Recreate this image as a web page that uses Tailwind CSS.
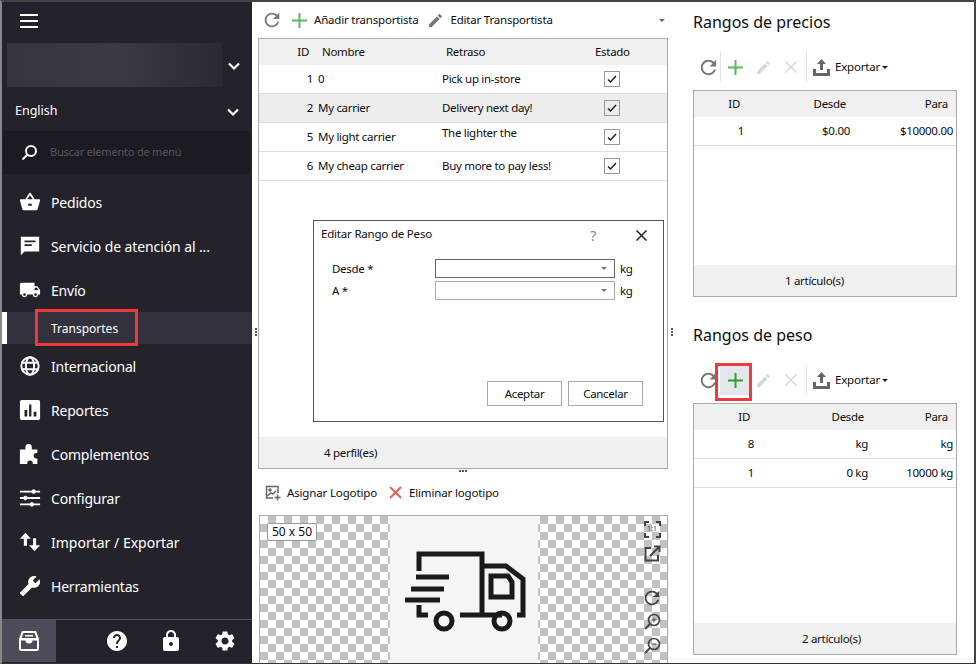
<!DOCTYPE html>
<html lang="es">
  <head>
    <meta charset="UTF-8" />
    <title>Transportes</title>
    <script src="https://cdn.jsdelivr.net/npm/@tailwindcss/browser@4"></script>
  </head>
  <body class="bg-white font-['Noto_Sans',sans-serif] text-[11.5px] tracking-[-0.3px] text-[#0d0d0d] overflow-hidden">
    <div class="relative flex w-[976px] h-[664px] border-t-2 border-r-2 border-b border-l-2 border-t-[#444] border-r-[#444] border-b-[#333] border-l-[#888] box-border">

      <!-- Sidebar -->
      <aside class="w-[250px] shrink-0 flex flex-col bg-[#24232c] text-white text-[14px] tracking-[-0.2px]">
        <div class="h-[41px] pl-[18px] pt-[12px] shrink-0">
          <div class="w-[18px] h-[14px] flex flex-col justify-between">
            <span class="h-[2px] bg-white"></span><span class="h-[2px] bg-white"></span><span class="h-[2px] bg-white"></span>
          </div>
        </div>
        <div class="h-[44px] flex items-center shrink-0 pl-[5px]">
          <div class="w-[215px] h-[44px] bg-gradient-to-r from-[#36353b] via-[#3b3a40] to-[#2b2a32]"></div>
          <svg class="ml-[4px] w-[16px] h-[16px] mt-[2px]" viewBox="0 0 16 16" fill="none" stroke="white" stroke-width="2.2"><path d="M3 5.500l5 5 5-5" /></svg>
        </div>
        <div class="h-[44px] pt-[5px] flex items-center justify-between shrink-0 pl-[13px] pr-[11px] text-[12.5px] tracking-normal">
          <span>English</span>
          <svg class="w-[16px] h-[16px]" viewBox="0 0 16 16" fill="none" stroke="white" stroke-width="2.2"><path d="M3 5.500l5 5 5-5" /></svg>
        </div>
        <div class="h-[43px] ml-[1px] mr-[2px] flex items-center bg-[#1b1b21] shrink-0 pl-[18px] gap-[12px] text-[11px] text-[#55555c] tracking-normal">
          <svg class="w-[17px] h-[17px]" viewBox="0 0 17 17" fill="none" stroke="white" stroke-width="2"><circle cx="10" cy="7" r="5" /><path d="M6.500 10.500L1.500 15.500" /></svg>
          <span class="tracking-[-0.2px]">Buscar elemento de menú</span>
        </div>

        <nav class="flex-1 pt-[6px]">
          <a class="flex items-center h-[44px] pl-[17px] gap-[10px]">
            <svg class="w-[22px] h-[22px]" viewBox="0 0 24 24" fill="white"><path d="M17.210 9l-4.380-6.560c-.19-.28-.51-.42-.83-.42-.32 0-.64.14-.83.43L6.790 9H2c-.55 0-1 .45-1 1 0 .09.01.18.04.27l2.540 9.270c.23.84 1 1.460 1.920 1.460h13c.92 0 1.690-.62 1.930-1.460l2.540-9.270L23 10c0-.55-.45-1-1-1h-4.790zM9 9l3-4.400L15 9H9zm1 5h4v2h-4z" fill-rule="evenodd" /></svg>
            <span>Pedidos</span>
          </a>
          <a class="flex items-center h-[44px] pl-[17px] gap-[10px]">
            <svg class="w-[22px] h-[22px]" viewBox="0 0 24 24" fill="white"><path fill-rule="evenodd" d="M2 2h20v16H6l-4 4V2zm4 4v2h12V6H6zm0 4v2h8v-2H6z" /></svg>
            <span class="tracking-[-0.1px]">Servicio de atención al ...</span>
          </a>
          <a class="flex items-center h-[44px] pl-[17px] gap-[10px]">
            <svg class="w-[22px] h-[22px]" viewBox="0 0 24 24" fill="white"><path d="M20 8h-3V4H3c-1.100 0-2 .9-2 2v11h2c0 1.660 1.340 3 3 3s3-1.340 3-3h6c0 1.660 1.340 3 3 3s3-1.340 3-3h2v-5l-3-4zM6 18.500c-.83 0-1.500-.67-1.500-1.500s.67-1.500 1.500-1.500 1.500.67 1.500 1.500-.67 1.500-1.500 1.500zm13.500-9l1.960 2.500H17V9.500h2.500zm-1.500 9c-.83 0-1.500-.67-1.500-1.500s.67-1.500 1.500-1.500 1.500.67 1.500 1.500-.67 1.500-1.500 1.500z" /></svg>
            <span>Envío</span>
          </a>
          <a class="relative flex items-center h-[32px] pt-[1px] pl-[49px] bg-[#33323c] text-[12px] tracking-normal">
            <span class="absolute left-0 top-0 bottom-0 w-[5px] bg-white"></span>
            <span>Transportes</span>
            <span class="absolute left-[33px] -top-[3px] w-[103px] h-[37px] border-[3px] border-[#f0393f]"></span>
          </a>
          <a class="flex items-center h-[44px] pl-[17px] gap-[10px]">
            <svg class="w-[22px] h-[22px]" viewBox="0 0 24 24" fill="none" stroke="white" stroke-width="2.200"><circle cx="12" cy="12" r="9.500" /><ellipse cx="12" cy="12" rx="4.500" ry="9.500" /><path d="M2.500 8.500h19M2.500 15.500h19" /></svg>
            <span>Internacional</span>
          </a>
          <a class="flex items-center h-[44px] pl-[17px] gap-[10px]">
            <svg class="w-[22px] h-[22px]" viewBox="0 0 24 24" fill="white"><path d="M3 1h18c1.100 0 2 .9 2 2v18c0 1.100-.9 2-2 2H3c-1.100 0-2-.9-2-2V3c0-1.100.9-2 2-2zm3 11v7h3v-7H6zm5-6v13h2.500V6H11zm5 8v5h3v-5h-3z" fill-rule="evenodd" /></svg>
            <span>Reportes</span>
          </a>
          <a class="flex items-center h-[44px] pl-[17px] gap-[10px]">
            <svg class="w-[22px] h-[22px]" viewBox="0 0 24 24" fill="white"><path d="M1 7h6V4.500a3.500 3.500 0 0 1 7 0V7h6v4h-1a3 3 0 0 0 0 6h1v6h-5v-1a3 3 0 0 0-6 0v1H1z" /></svg>
            <span>Complementos</span>
          </a>
          <a class="flex items-center h-[44px] pl-[17px] gap-[10px]">
            <svg class="w-[22px] h-[22px]" viewBox="0 0 24 24" fill="white" stroke="white"><path d="M1 5h22M1 12h22M1 19h22" stroke-width="2" /><circle cx="16" cy="5" r="2" /><circle cx="7" cy="12" r="2" /><circle cx="14" cy="19" r="2" /></svg>
            <span>Configurar</span>
          </a>
          <a class="flex items-center h-[44px] pl-[17px] gap-[10px]">
            <svg class="w-[22px] h-[22px]" viewBox="0 0 24 24" fill="white"><path d="M7 2L1 8.500h4.300V16h3.400V8.500H13L7 2zm10 20l6-6.500h-4.300V8h-3.400v7.500H11L17 22z" /></svg>
            <span class="tracking-normal">Importar / Exportar</span>
          </a>
          <a class="flex items-center h-[44px] pl-[17px] gap-[10px]">
            <svg class="w-[22px] h-[22px] -scale-x-100" viewBox="0 0 24 24" fill="white"><path d="M22.700 19l-9.100-9.100c.9-2.300.4-5-1.500-6.900-2-2-5-2.400-7.400-1.300L9 6 6 9 1.600 4.700C.4 7.100.9 10.100 2.900 12.100c1.900 1.900 4.600 2.400 6.900 1.500l9.100 9.100c.4.4 1 .4 1.400 0l2.300-2.300c.5-.4.5-1.100.1-1.400z" /></svg>
            <span>Herramientas</span>
          </a>
        </nav>

        <div class="h-[43px] flex items-center border-t border-[#55545c] shrink-0 mb-[1px]">
          <div class="w-[54px] h-full flex items-center justify-center bg-[#4e4c58]">
            <svg class="w-[22px] h-[22px]" viewBox="0 0 22 22" fill="white"><path fill-rule="evenodd" d="M4 1h14l3 8v10c0 1.100-.9 2-2 2H3c-1.100 0-2-.9-2-2V9l3-8zm1.500 2L3.500 8h15l-2-5h-11zM3 10.500V19h16v-8.500h-4.500a3.500 3 0 0 1-7 0H3z" /><path d="M7 5h8v1.500H7z" /></svg>
          </div>
          <div class="w-[54px] ml-[34px] flex justify-center">
            <svg class="w-[24px] h-[24px]" viewBox="0 0 24 24" fill="white"><path d="M12 2C6.480 2 2 6.480 2 12s4.480 10 10 10 10-4.480 10-10S17.520 2 12 2zm1 17h-2v-2h2v2zm2.070-7.750l-.9.920C13.450 12.900 13 13.500 13 15h-2v-.5c0-1.100.45-2.100 1.170-2.830l1.240-1.260c.37-.36.59-.86.59-1.410 0-1.100-.9-2-2-2s-2 .9-2 2H8c0-2.210 1.790-4 4-4s4 1.790 4 4c0 .88-.36 1.680-.93 2.250z" /></svg>
          </div>
          <div class="w-[54px] flex justify-center">
            <svg class="w-[24px] h-[24px]" viewBox="0 0 24 24" fill="white"><path d="M18 8h-1V6c0-2.760-2.240-5-5-5S7 3.240 7 6v2H6c-1.100 0-2 .9-2 2v10c0 1.100.9 2 2 2h12c1.100 0 2-.9 2-2V10c0-1.100-.9-2-2-2zm-6 9c-1.100 0-2-.9-2-2s.9-2 2-2 2 .9 2 2-.9 2-2 2zm3.100-9H8.900V6c0-1.710 1.390-3.100 3.100-3.100 1.710 0 3.100 1.390 3.100 3.100v2z" /></svg>
          </div>
          <div class="w-[54px] flex justify-center">
            <svg class="w-[24px] h-[24px]" viewBox="0 0 24 24" fill="white"><path d="M19.140 12.940c.04-.3.06-.61.06-.94 0-.32-.02-.64-.07-.94l2.030-1.580c.18-.14.23-.41.12-.61l-1.920-3.320c-.12-.22-.37-.29-.59-.22l-2.390.96c-.5-.38-1.030-.7-1.620-.94l-.36-2.540c-.04-.24-.24-.41-.48-.41h-3.840c-.24 0-.43.17-.47.41l-.36 2.540c-.59.24-1.130.57-1.620.94l-2.390-.96c-.22-.08-.47 0-.59.22L2.740 8.870c-.12.21-.08.47.12.61l2.030 1.580c-.05.3-.09.63-.09.94s.02.64.07.94l-2.030 1.580c-.18.14-.23.41-.12.61l1.920 3.320c.12.22.37.29.59.22l2.390-.96c.5.38 1.030.7 1.620.94l.36 2.540c.05.24.24.41.48.41h3.840c.24 0 .44-.17.47-.41l.36-2.540c.59-.24 1.130-.56 1.620-.94l2.390.96c.22.08.47 0 .59-.22l1.920-3.320c.12-.22.07-.47-.12-.61l-2.010-1.580zM12 15.600c-1.980 0-3.600-1.620-3.600-3.600s1.620-3.600 3.600-3.600 3.600 1.620 3.600 3.600-1.620 3.600-3.600 3.600z" /></svg>
          </div>
        </div>
      </aside>

      <!-- Carriers column -->
      <main class="relative w-[433px] shrink-0 pl-[6px] pr-[17px] flex flex-col">
        <span class="absolute left-[3px] top-[326px] w-[2px] h-[8px] bg-[repeating-linear-gradient(#555_0_2px,transparent_2px_3px)]"></span>
        <span class="absolute left-[419px] top-[326px] w-[2px] h-[8px] bg-[repeating-linear-gradient(#555_0_2px,transparent_2px_3px)]"></span>
        <span class="absolute left-[207px] top-[468px] w-[8px] h-[2px] bg-[repeating-linear-gradient(90deg,#555_0_2px,transparent_2px_3px)]"></span>

        <div class="h-[36px] shrink-0 flex items-center pl-[3px]">
          <svg class="w-[22px] h-[22px]" viewBox="0 0 24 24" fill="#777"><path d="M17.650 6.350C16.200 4.900 14.210 4 12 4c-4.420 0-7.990 3.580-7.990 8s3.570 8 7.990 8c3.730 0 6.840-2.550 7.730-6h-2.080c-.82 2.330-3.040 4-5.650 4-3.310 0-6-2.690-6-6s2.690-6 6-6c1.660 0 3.140.69 4.220 1.780L13 11h7V4l-2.350 2.350z" /></svg>
          <svg class="ml-[9px] w-[15px] h-[15px]" viewBox="0 0 15 15" stroke="#5cb85c" stroke-width="2"><path d="M7.500 0v15M0 7.500h15" /></svg>
          <span class="ml-[7px] tracking-[-0.2px]">Añadir transportista</span>
          <svg class="ml-[9px] w-[17px] h-[17px]" viewBox="0 0 24 24" fill="#777"><path d="M3 17.250V21h3.750L17.810 9.940l-3.750-3.750L3 17.250zM20.710 7.040c.39-.39.39-1.020 0-1.410l-2.340-2.340c-.39-.39-1.020-.39-1.410 0l-1.830 1.830 3.750 3.750 1.830-1.830z" /></svg>
          <span class="ml-[6px] tracking-[-0.2px]">Editar Transportista</span>
          <span class="ml-auto mr-[3px] w-0 h-0 border-x-[3px] border-x-transparent border-t-[3px] border-t-[#666]"></span>
        </div>

        <section class="relative h-[431px] shrink-0 border border-[#aaa] flex flex-col">
          <div class="h-[26px] shrink-0 flex items-center bg-[#f0f0f0]">
            <span class="w-[50px] text-right">ID</span>
            <span class="ml-[13px] w-[124px]">Nombre</span>
            <span class="w-[149px]">Retraso</span>
            <span class="w-[34px] text-center">Estado</span>
          </div>
          <div class="h-[29px] flex items-center border-b border-[#ddd]">
            <span class="w-[54px] text-right">1</span>
            <span class="ml-[5px] w-[124px]">0</span>
            <span class="w-[162px]">Pick up in-store</span>
            <span class="w-[16px] h-[16px] border border-[#999] flex items-center justify-center"><svg class="w-[10px] h-[10px]" viewBox="0 0 10 10" fill="none" stroke="#222" stroke-width="1.500"><path d="M1 5.500l2.500 2.500 5.500-6" /></svg></span>
          </div>
          <div class="h-[29px] flex items-center border-b border-[#ddd] bg-[#ededed]">
            <span class="w-[54px] text-right">2</span>
            <span class="ml-[5px] w-[124px]">My carrier</span>
            <span class="w-[162px]">Delivery next day!</span>
            <span class="w-[16px] h-[16px] border border-[#999] flex items-center justify-center"><svg class="w-[10px] h-[10px]" viewBox="0 0 10 10" fill="none" stroke="#222" stroke-width="1.500"><path d="M1 5.500l2.500 2.500 5.500-6" /></svg></span>
          </div>
          <div class="h-[29px] flex items-center border-b border-[#ddd]">
            <span class="w-[54px] text-right">5</span>
            <span class="ml-[5px] w-[124px]">My light carrier</span>
            <span class="w-[162px] -mt-[9px]">The lighter the</span>
            <span class="w-[16px] h-[16px] border border-[#999] flex items-center justify-center"><svg class="w-[10px] h-[10px]" viewBox="0 0 10 10" fill="none" stroke="#222" stroke-width="1.500"><path d="M1 5.500l2.500 2.500 5.500-6" /></svg></span>
          </div>
          <div class="h-[29px] flex items-center border-b border-[#ddd]">
            <span class="w-[54px] text-right">6</span>
            <span class="ml-[5px] w-[124px]">My cheap carrier</span>
            <span class="w-[162px]">Buy more to pay less!</span>
            <span class="w-[16px] h-[16px] border border-[#999] flex items-center justify-center"><svg class="w-[10px] h-[10px]" viewBox="0 0 10 10" fill="none" stroke="#222" stroke-width="1.500"><path d="M1 5.500l2.500 2.500 5.500-6" /></svg></span>
          </div>
          <div class="flex-1"></div>
          <div class="h-[31px] shrink-0 flex items-center bg-[#f0f0f0] pl-[65px]">4 perfil(es)</div>
        </section>

        <div class="h-[46px] shrink-0 flex items-center pl-[7px] pt-[1px]">
          <svg class="w-[16px] h-[16px]" viewBox="0 0 16 16" fill="none" stroke="#666" stroke-width="1.500"><path d="M8 13H1.500V1.500H13V8" /><circle cx="5" cy="5" r="1" fill="#666" /><path d="M2 11l4-3 2 1 3-3" /><path d="M12.500 9.500v6M9.500 12.500h6" /></svg>
          <span class="ml-[6px] tracking-[-0.15px]">Asignar Logotipo</span>
          <svg class="ml-[12px] w-[13px] h-[13px]" viewBox="0 0 13 13" stroke="#e8605a" stroke-width="2"><path d="M1 1l11 11M12 1L1 12" /></svg>
          <span class="ml-[7px] tracking-[-0.15px]">Eliminar logotipo</span>
        </div>

        <section class="relative flex-1 min-h-0 border-x border-t border-[#aaa] flex justify-center bg-white bg-[repeating-conic-gradient(#c2c2c2_0_25%,#fff_0_50%)] bg-[length:16px_16px] ml-[1px] overflow-hidden">
          <div class="w-[148px] h-full bg-[#f5f5f5]">
            <svg class="w-[148px] h-[148px]" viewBox="0 0 148 148" fill="none" stroke="#1a1a1a" stroke-width="5">
              <path d="M29 55V38H92V99M29 89V99H38M70 99H112M127 99H133V63L116 50H92" />
              <path d="M101 60H118L122 66V81H101Z" />
              <path d="M26 61H59M21 73H54M15 84H50" />
              <circle cx="54" cy="105" r="8" />
              <circle cx="112" cy="105" r="8" />
            </svg>
          </div>
          <span class="absolute left-[7px] top-[7px] h-[18px] px-[4px] flex items-center bg-white border border-[#999] rounded-[2px] text-[12px] tracking-normal">50 x 50</span>
          <div class="absolute right-0 top-0 bottom-0 w-[30px] flex flex-col items-center pt-[5px]">
            <span class="relative w-[17px] h-[17px] flex items-center justify-center text-[7px] text-[#444] tracking-normal">
              <svg class="absolute inset-0 w-[17px] h-[17px]" viewBox="0 0 17 17" fill="none" stroke="#444" stroke-width="2"><path d="M1 5V1h4M12 1h4v4M16 12v4h-4M5 16H1v-4" /></svg>
              1:1
            </span>
            <svg class="mt-[7px] w-[17px] h-[17px]" viewBox="0 0 17 17" fill="none" stroke="#444" stroke-width="2"><path d="M7 3H1.500v12.500H14V10M6 11L15.500 1.500M10 1.500h5.500V7" /></svg>
            <svg class="mt-[25px] w-[22px] h-[22px]" viewBox="0 0 24 24" fill="#444"><path d="M17.650 6.350C16.200 4.900 14.210 4 12 4c-4.420 0-7.990 3.580-7.990 8s3.570 8 7.990 8c3.730 0 6.840-2.550 7.730-6h-2.080c-.82 2.330-3.040 4-5.650 4-3.310 0-6-2.690-6-6s2.690-6 6-6c1.660 0 3.140.69 4.220 1.780L13 11h7V4l-2.350 2.350z" /></svg>
            <svg class="mt-[4px] w-[17px] h-[17px]" viewBox="0 0 17 17" fill="none" stroke="#444" stroke-width="1.700"><circle cx="10" cy="7" r="5.500" /><path d="M6 11l-5 5" stroke-width="2" /><path d="M7.500 7h5M10 4.500v5" stroke-width="1" /></svg>
            <svg class="mt-[7px] w-[17px] h-[17px]" viewBox="0 0 17 17" fill="none" stroke="#444" stroke-width="1.700"><circle cx="10" cy="7" r="5.500" /><path d="M6 11l-5 5" stroke-width="2" /><path d="M7.500 7h5" stroke-width="1" /></svg>
          </div>
        </section>

        <!-- Dialog -->
        <div class="absolute left-[61px] top-[218px] w-[351px] h-[202px] bg-white border border-[#555] flex flex-col">
          <div class="h-[25px] flex items-center pl-[7px] pr-[16px] shrink-0">
            <span class="tracking-[-0.2px]">Editar Rango de Peso</span>
            <span class="ml-auto text-[14px] text-[#888] mt-[3px]">?</span>
            <svg class="ml-[40px] w-[11px] h-[11px] mt-[3px]" viewBox="0 0 11 11" stroke="#222" stroke-width="1.500"><path d="M.5.5l10 10M10.500.5l-10 10" /></svg>
          </div>
          <div class="mt-[13px] pl-[18px] flex items-center h-[19px]">
            <span class="w-[103px]">Desde *</span>
            <span class="w-[180px] h-[19px] border border-[#666] flex items-center justify-end pr-[7px]"><span class="w-0 h-0 border-x-[3.500px] border-x-transparent border-t-[3.500px] border-t-[#777]"></span></span>
            <span class="ml-[5px]">kg</span>
          </div>
          <div class="mt-[3px] pl-[18px] flex items-center h-[19px]">
            <span class="w-[103px]">A *</span>
            <span class="w-[180px] h-[19px] border border-[#aaa] flex items-center justify-end pr-[7px]"><span class="w-0 h-0 border-x-[3.500px] border-x-transparent border-t-[3.500px] border-t-[#777]"></span></span>
            <span class="ml-[5px]">kg</span>
          </div>
          <div class="mt-auto mb-[15px] flex justify-end gap-[6px] pr-[20px]">
            <button class="w-[75px] h-[25px] border border-[#aaa] bg-white">Aceptar</button>
            <button class="w-[75px] h-[25px] border border-[#aaa] bg-white">Cancelar</button>
          </div>
        </div>
      </main>

      <!-- Range panels -->
      <div class="w-[289px] shrink-0 pl-[8px]">
        <section class="h-[313px] flex flex-col">
          <h2 class="h-[40px] pt-[8px] text-[16px] leading-[24px] font-normal tracking-normal">Rangos de precios</h2>
          <div class="h-[48px] pt-[2px] shrink-0 flex items-center pl-[4px]">
            <svg class="w-[23px] h-[23px]" viewBox="0 0 24 24" fill="#777"><path d="M17.650 6.350C16.200 4.900 14.210 4 12 4c-4.420 0-7.990 3.580-7.990 8s3.570 8 7.990 8c3.730 0 6.840-2.550 7.730-6h-2.080c-.82 2.330-3.040 4-5.650 4-3.310 0-6-2.690-6-6s2.690-6 6-6c1.660 0 3.140.69 4.220 1.780L13 11h7V4l-2.350 2.350z" /></svg>
            <span class="w-px h-[30px] bg-[#e4e4e4]"></span>
            <svg class="ml-[7px] w-[15px] h-[15px]" viewBox="0 0 15 15" stroke="#5cb85c" stroke-width="2"><path d="M7.500 0v15M0 7.500h15" /></svg>
            <svg class="ml-[12px] w-[17px] h-[17px]" viewBox="0 0 24 24" fill="#d8d8d8"><path d="M3 17.250V21h3.750L17.810 9.940l-3.750-3.750L3 17.250zM20.710 7.040c.39-.39.39-1.020 0-1.410l-2.340-2.340c-.39-.39-1.020-.39-1.410 0l-1.830 1.830 3.750 3.750 1.830-1.830z" /></svg>
            <svg class="ml-[13px] w-[12px] h-[12px]" viewBox="0 0 12 12" stroke="#d8d8d8" stroke-width="1.500"><path d="M.5.5l11 11M11.500.5l-11 11" /></svg>
            <span class="ml-[9px] w-px h-[30px] bg-[#e4e4e4]"></span>
            <svg class="ml-[6px] w-[17px] h-[17px]" viewBox="0 0 17 17" fill="#666"><path d="M8.500 0L13 5H10v6H7V5H4z" /><path d="M0 10h3v4h11v-4h3v7H0z" /></svg>
            <span class="ml-[5px] tracking-[-0.2px]">Exportar</span>
            <span class="ml-[2px] w-0 h-0 border-x-[3px] border-x-transparent border-t-[3px] border-t-[#222]"></span>
          </div>
          <div class="h-[207px] shrink-0 border border-[#aaa] flex flex-col w-[264px]">
            <div class="h-[26px] shrink-0 flex items-center bg-[#f0f0f0] pr-[8px]">
              <span class="w-[46px] text-right">ID</span>
              <span class="w-[106px] text-right">Desde</span>
              <span class="flex-1 text-right">Para</span>
            </div>
            <div class="h-[29px] flex items-center border-b border-[#ddd] pr-[3px]">
              <span class="w-[50px] text-right">1</span>
              <span class="w-[106px] text-right">$0.00</span>
              <span class="flex-1 text-right">$10000.00</span>
            </div>
            <div class="flex-1"></div>
            <div class="h-[31px] shrink-0 flex items-center bg-[#f0f0f0] pl-[91px]">1 artículo(s)</div>
          </div>
        </section>

        <section class="flex flex-col">
          <h2 class="h-[40px] pt-[8px] text-[16px] leading-[24px] font-normal tracking-normal">Rangos de peso</h2>
          <div class="relative h-[48px] pt-[2px] shrink-0 flex items-center pl-[4px]">
            <svg class="w-[23px] h-[23px]" viewBox="0 0 24 24" fill="#777"><path d="M17.650 6.350C16.200 4.900 14.210 4 12 4c-4.420 0-7.990 3.580-7.990 8s3.570 8 7.990 8c3.730 0 6.840-2.550 7.730-6h-2.080c-.82 2.330-3.040 4-5.650 4-3.310 0-6-2.690-6-6s2.690-6 6-6c1.660 0 3.140.69 4.220 1.780L13 11h7V4l-2.350 2.350z" /></svg>
            <span class="w-[30px] h-[30px] -mr-[7px] flex items-center justify-center bg-[#e5e5ec]">
              <svg class="w-[15px] h-[15px]" viewBox="0 0 15 15" stroke="#2ea02e" stroke-width="2"><path d="M7.500 0v15M0 7.500h15" /></svg>
            </span>
            <span class="absolute left-[22px] top-[8px] w-[37px] h-[38px] border-[3px] border-[#f0393f]"></span>
            <svg class="ml-[12px] w-[17px] h-[17px]" viewBox="0 0 24 24" fill="#d8d8d8"><path d="M3 17.250V21h3.750L17.810 9.940l-3.750-3.750L3 17.250zM20.710 7.040c.39-.39.39-1.020 0-1.410l-2.340-2.340c-.39-.39-1.020-.39-1.410 0l-1.830 1.830 3.750 3.750 1.830-1.830z" /></svg>
            <svg class="ml-[13px] w-[12px] h-[12px]" viewBox="0 0 12 12" stroke="#d8d8d8" stroke-width="1.500"><path d="M.5.5l11 11M11.500.5l-11 11" /></svg>
            <span class="ml-[9px] w-px h-[30px] bg-[#e4e4e4]"></span>
            <svg class="ml-[6px] w-[17px] h-[17px]" viewBox="0 0 17 17" fill="#666"><path d="M8.500 0L13 5H10v6H7V5H4z" /><path d="M0 10h3v4h11v-4h3v7H0z" /></svg>
            <span class="ml-[5px] tracking-[-0.2px]">Exportar</span>
            <span class="ml-[2px] w-0 h-0 border-x-[3px] border-x-transparent border-t-[3px] border-t-[#222]"></span>
          </div>
          <div class="h-[252px] shrink-0 border border-[#aaa] flex flex-col w-[264px]">
            <div class="h-[26px] shrink-0 flex items-center bg-[#f0f0f0] pr-[8px]">
              <span class="w-[56px] text-right">ID</span>
              <span class="w-[114px] text-right">Desde</span>
              <span class="flex-1 text-right">Para</span>
            </div>
            <div class="h-[29px] flex items-center border-b border-[#ddd] pr-[3px]">
              <span class="w-[60px] text-right">8</span>
              <span class="w-[114px] text-right">kg</span>
              <span class="flex-1 text-right">kg</span>
            </div>
            <div class="h-[29px] flex items-center border-b border-[#ddd] pr-[3px]">
              <span class="w-[60px] text-right">1</span>
              <span class="w-[114px] text-right">0 kg</span>
              <span class="flex-1 text-right">10000 kg</span>
            </div>
            <div class="flex-1"></div>
            <div class="h-[31px] shrink-0 flex items-center bg-[#f0f0f0] pl-[108px]">2 artículo(s)</div>
          </div>
        </section>
      </div>
    </div>
  </body>
</html>
